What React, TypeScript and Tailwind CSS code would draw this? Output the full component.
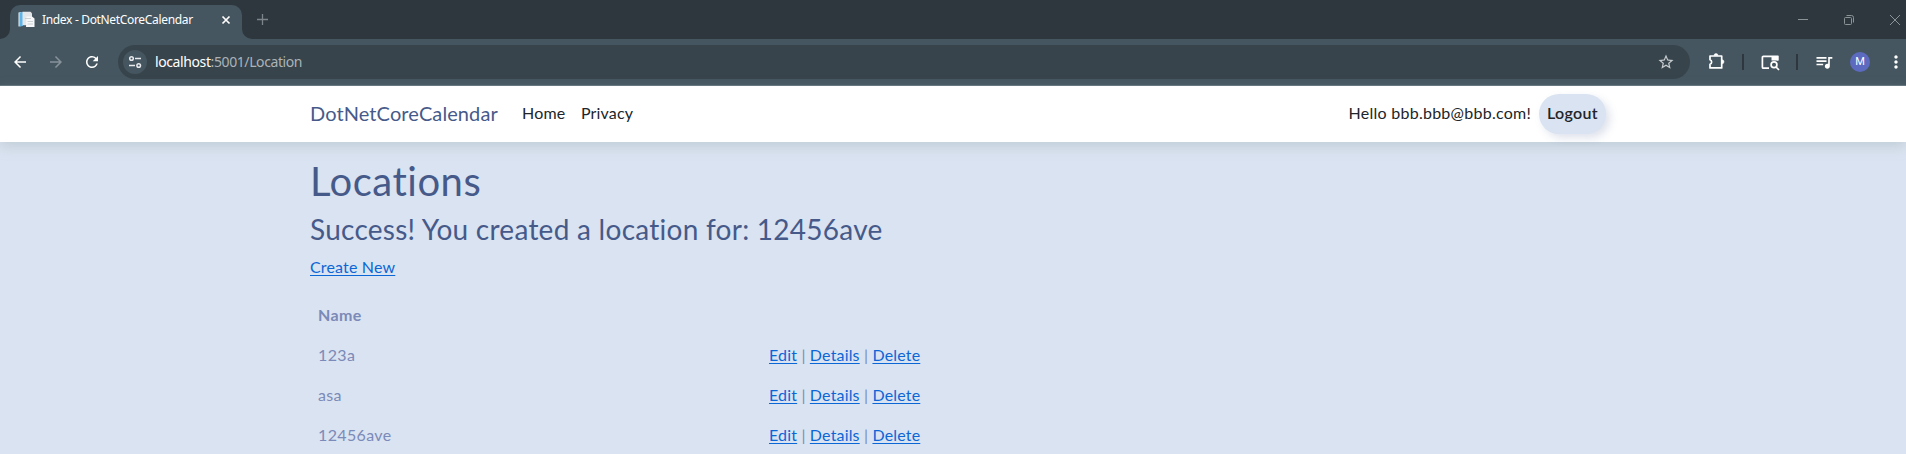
import React from "react";
import { MdArrowBack, MdArrowForward, MdRefresh, MdStarOutline, MdQueueMusic, MdMoreVert } from "react-icons/md";

function DocumentIcon() {
  return (
    <svg width="17" height="17" viewBox="0 0 17 17" className="shrink-0">
      <path d="M.5 1.500l3-.5v14l-3 .5z" fill="#e8f4fb" />
      <path d="M1.500 1.500l3.500-.5v14l-3.500.5z" fill="#5fb4e6" />
      <path d="M4.500.8h8l1.500 1.500v12H4.500z" fill="#e4e7ea" />
      <path d="M8.500 5.500h5.500l2.500 2v8.500H8z" fill="#f7f8f9" />
      <path d="M7 7.500h6M9.500 10.500h5.500M9.500 13h5.500" stroke="#bfc6cb" strokeWidth=".8" />
    </svg>
  );
}

function TuneIcon() {
  return (
    <svg width="14" height="14" viewBox="0 0 14 14" fill="none" stroke="#e8eaed" strokeWidth="1.500">
      <circle cx="3.500" cy="3.500" r="1.800" />
      <path d="M7 3.500h6M1 10.500h6" />
      <circle cx="10.700" cy="10.500" r="1.800" />
    </svg>
  );
}

function PuzzleIcon() {
  return (
    <svg width="18" height="18" viewBox="0 0 18 18" fill="none">
      <path d="M2 4h11.700v11.900H2v-3.700a2.300 2.300 0 0 0 0-4.400z" stroke="#fff" strokeWidth="1.700" strokeLinejoin="round" />
      <path d="M6 3.500a2 2 0 0 1 4 0zM14 7.800a2 2 0 0 1 0 4z" fill="#fff" stroke="#fff" strokeWidth=".5" />
    </svg>
  );
}

function SidePanelSearchIcon() {
  return (
    <svg width="19" height="16" viewBox="0 0 19 16" fill="none" stroke="#fff" strokeWidth="1.700">
      <path d="M8 13.200H2.400a1 1 0 0 1-1-1V2.400a1 1 0 0 1 1-1h14.200v4.200" />
      <path d="M10.500 1h7v4.500h-7z" fill="#fff" stroke="none" />
      <circle cx="13" cy="9.800" r="2.900" />
      <path d="M15 12l3 3" />
    </svg>
  );
}

function BrowserChrome() {
  return (
    <div className="font-['Noto_Sans','Open_Sans',sans-serif]">
      <div className="flex h-[39px] items-end bg-[#2d373d]">
        <svg width="10" height="10" viewBox="0 0 10 10">
          <path d="M10 0v10H0A10 10 0 0 0 10 0z" fill="#455660" />
        </svg>
        <div className="flex h-[34px] w-[232px] items-center rounded-t-[10px] bg-[#455660] pb-[5px] pl-2">
          <div className="flex h-[29px] w-full items-center">
            <DocumentIcon />
            <span className="ml-[7px] w-[170px] whitespace-nowrap text-[12px] tracking-[-0.33px] text-white">Index - DotNetCoreCalendar</span>
            <svg width="10" height="10" viewBox="0 0 10 10" className="ml-[9px]">
              <path d="M1.500 1.500l7 7m0-7l-7 7" stroke="#fff" strokeWidth="1.700" />
            </svg>
          </div>
        </div>
        <svg width="10" height="10" viewBox="0 0 10 10">
          <path d="M0 0v10h10A10 10 0 0 1 0 0z" fill="#455660" />
        </svg>
        <div className="flex h-[39px] flex-1 items-center justify-between pl-[5px] pr-[4px]">
          <svg width="11" height="11" viewBox="0 0 11 11">
            <path d="M5.500 0v11M0 5.500h11" stroke="#7d858a" strokeWidth="1.300" />
          </svg>
          <svg width="104" height="12" viewBox="0 0 104 12" fill="none" stroke="#8b9397">
            <path d="M0 5.500h10" />
            <rect x="46.500" y="3.500" width="7" height="7" rx="1" />
            <path d="M48.500 1.500h5a2 2 0 0 1 2 2v5" />
            <path d="M92 1l10 10m0-10l-10 10" />
          </svg>
        </div>
      </div>
      <div className="flex h-[47px] items-center border-b border-[#65757f] bg-[#455660]">
        <MdArrowBack className="ml-[11px] size-[18px] text-white" />
        <MdArrowForward className="ml-[18px] size-[18px] text-[#87929a]" />
        <MdRefresh className="ml-[18px] size-[18px] text-white" />
        <div className="ml-[17px] flex h-[34px] w-[1572px] items-center rounded-full bg-[#38444b] pl-[5px]">
          <div className="flex size-6 items-center justify-center rounded-full bg-[#455660]">
            <TuneIcon />
          </div>
          <span className="ml-[8px] flex-1 pb-px text-[14px] tracking-[-0.4px] text-[#abb3b8]">
            <span className="text-white">localhost</span>:5001/Location
          </span>
          <MdStarOutline className="mr-[15px] size-[18px] text-[#c7ccd0]" />
        </div>
        <div className="flex flex-1 items-center">
          <div className="ml-[18px] pb-[2px]"><PuzzleIcon /></div>
          <div className="ml-[16px] h-4 w-[2px] bg-[#2d373d]" />
          <div className="ml-[17px] pt-[2px]"><SidePanelSearchIcon /></div>
          <div className="ml-[16px] h-4 w-[2px] bg-[#2d373d]" />
          <MdQueueMusic className="ml-[16px] size-5 text-white" />
          <div className="ml-[16px] flex size-5 items-center justify-center rounded-full bg-[#5c6bc0] font-['Roboto',sans-serif] text-[11px] text-white">M</div>
          <MdMoreVert className="ml-[16px] size-5 shrink-0 text-white" />
        </div>
      </div>
    </div>
  );
}

function NavBar() {
  return (
    <header className="relative flex h-14 items-center bg-white pl-[310px] pr-[300px] text-[16px] leading-6 text-[#212529] shadow-[0_4px_12px_rgba(144,164,164,0.35)]">
      <a className="w-[212px] whitespace-nowrap pb-[3px] text-[20px] leading-[30px] tracking-[0.1px] text-[#465a8a]">DotNetCoreCalendar</a>
      <a className="w-[59px] pb-[2px] tracking-[0.2px]">Home</a>
      <a className="flex-1 pb-[2px] tracking-[0.15px]">Privacy</a>
      <span className="mr-[8px] whitespace-nowrap pb-[2px] tracking-[0.26px]">Hello bbb.bbb@bbb.com!</span>
      <button className="h-10 w-[67px] rounded-[20px] bg-[#dae3f1] pb-[2px] font-semibold tracking-[0.35px] shadow-[4px_4px_8px_rgba(90,110,160,0.2)]">Logout</button>
    </header>
  );
}

function ActionLink({ children }: { children: string }) {
  return <a className="text-[#0b66d6] underline underline-offset-2">{children}</a>;
}

const locations = ["123a", "asa", "12456ave"];

export default function App() {
  return (
    <div className="flex h-[454px] w-full flex-col overflow-hidden bg-[#dae3f1]">
      <BrowserChrome />
      <div className="font-['Lato',sans-serif] [font-variant-ligatures:none]">
        <NavBar />
        <main className="w-[1606px] pl-[310px] pt-[15px] text-[16px] leading-6 tracking-[0.17px] text-[#7b8ab8]">
          <h1 className="mb-[7px] text-[40px] leading-[48px] tracking-[0.5px] text-[#465a8a]">Locations</h1>
          <h3 className="mb-[9px] text-[28px] leading-[34px] tracking-[0.26px] text-[#465a8a]">Success! You created a location for: 12456ave</h3>
          <p className="mb-4"><ActionLink>Create New</ActionLink></p>
          <div className="grid grid-cols-[451px_1fr]">
            <div className="h-10 p-2 font-bold tracking-[0.35px]">Name</div>
            <div className="h-10" />
            {locations.map((name) => (
              <React.Fragment key={name}>
                <div className="h-10 p-2 tracking-[0.35px]">{name}</div>
                <div className="h-10 p-2">
                  <ActionLink>Edit</ActionLink> | <ActionLink>Details</ActionLink> | <ActionLink>Delete</ActionLink>
                </div>
              </React.Fragment>
            ))}
          </div>
        </main>
      </div>
    </div>
  );
}
